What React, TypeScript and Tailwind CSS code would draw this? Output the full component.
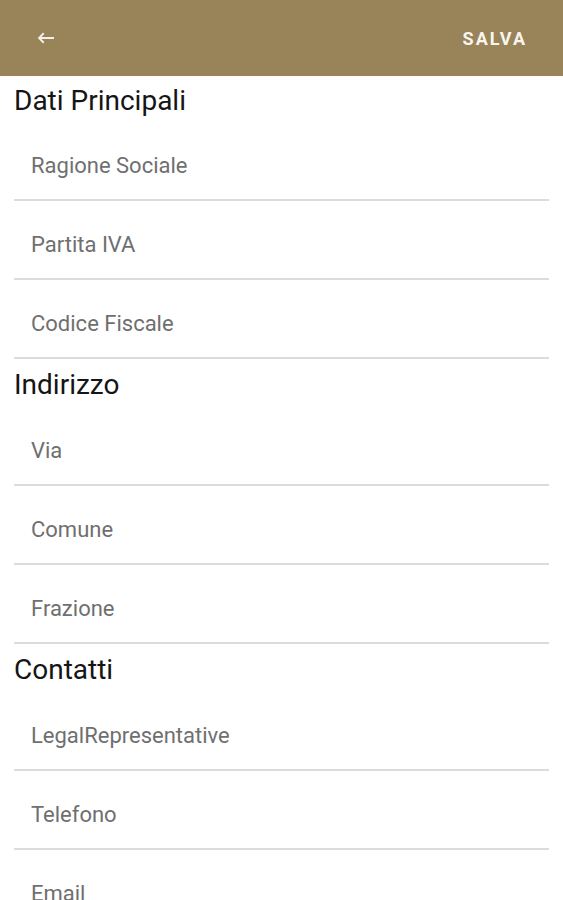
const sections = [
  { title: "Dati Principali", fields: ["Ragione Sociale", "Partita IVA", "Codice Fiscale"] },
  { title: "Indirizzo", fields: ["Via", "Comune", "Frazione"] },
  { title: "Contatti", fields: ["LegalRepresentative", "Telefono", "Email"] },
];

export default function App() {
  return (
    <div className="w-[563px] h-[900px] overflow-hidden bg-white font-['Roboto',sans-serif]">
      {/* Toolbar */}
      <div className="h-[76px] bg-[#998359] flex items-center justify-between pl-[37px] pr-[36px]">
        <svg width="18" height="12" viewBox="0 0 18 12" className="text-[#f5f1e8]">
          <path d="M6 0.5 L0.8 6 L6 11.5 L7.4 10.1 L4.4 7 L17 7 L17 5 L4.4 5 L7.4 1.9 Z" fill="currentColor" />
        </svg>
        <span className="text-[18px] font-bold tracking-[2px] text-[#f8f5ee]">SALVA</span>
      </div>

      {/* Form */}
      <div className="px-[14px]">
        {sections.map((s, i) => (
          <div key={s.title}>
            <div className={`${i === 0 ? "h-[46px]" : "h-[48px]"} flex items-center pt-[3px] text-[28px] leading-[32px] text-[#151515]`}>
              {s.title}
            </div>
            {s.fields.map((f) => (
              <div key={f} className="h-[79px] border-b-2 border-[#dcdcdc] flex items-start pt-[30px] pl-[17px]">
                <span className="text-[22px] leading-[28px] text-[#6f6f6f]">{f}</span>
              </div>
            ))}
          </div>
        ))}
      </div>
    </div>
  );
}
